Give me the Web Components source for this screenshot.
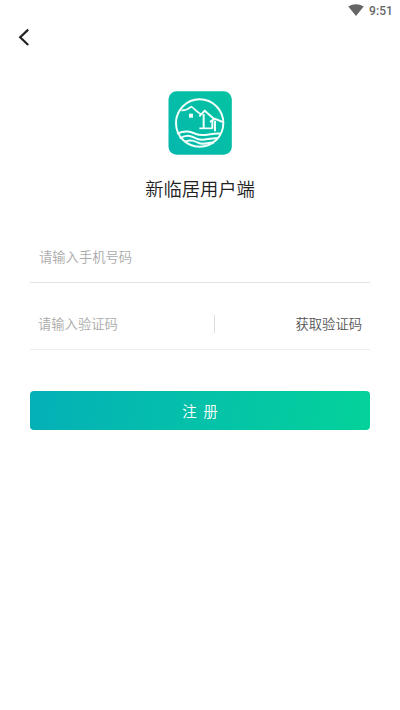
<!DOCTYPE html>
<html lang="zh-CN">
<head>
<meta charset="utf-8">
<title>新临居用户端</title>
<style>
html,body{margin:0;height:100%;background:#fff}
body{font-family:"Noto Sans CJK SC",sans-serif;overflow:hidden}
</style>
</head>
<body>
<register-page></register-page>
<script>
const define=(name,html)=>customElements.define(name,class extends HTMLElement{
  constructor(){
    super();
    const t=document.createElement('template');
    t.innerHTML=html;
    this.attachShadow({mode:'open'}).append(t.content.cloneNode(true));
  }
});

define('status-bar',`
<style>
:host{display:flex;justify-content:flex-end;align-items:center;height:21px;padding:1px 7px 0 0;gap:5px;box-sizing:border-box;color:#666;font:500 12px/20px Roboto,sans-serif}
svg{display:block;margin-top:-2px}
span{letter-spacing:.1px}
</style>
<svg width="16" height="12" viewBox="0 0 16 12"><path d="M8 12 .3 2.6Q3.800 .2 8 .2T15.700 2.600Z" fill="#666"/></svg>
<span><slot></slot></span>`);

define('nav-bar',`
<style>
:host{display:flex;align-items:center;height:33px;padding:0 0 2px 18px;box-sizing:border-box}
svg{display:block}
</style>
<svg width="12" height="18" viewBox="0 0 12 18"><path d="M10.200 1.600 2.200 9.300 10.200 17" fill="none" stroke="#222" stroke-width="2.200"/></svg>`);

define('app-logo',`
<style>:host{display:block;width:64px;height:64px}svg{display:block}</style>
<svg width="64" height="64" viewBox="24 21 192 192" fill="none" stroke="#f2fffb" stroke-linejoin="round">
<defs><linearGradient id="g" x1="0" y1="1" x2="1" y2="0"><stop offset="0" stop-color="#05b7ad"/><stop offset="1" stop-color="#05c3a2"/></linearGradient></defs>
<rect x="25.500" y="22" width="190" height="190" rx="24" fill="url(#g)" stroke="none"/>
<circle cx="119" cy="117" r="71" stroke-width="6"/>
<path d="M64 79C77 80 83 77 94 68C103 74 111 85 123 91" stroke-width="5"/>
<rect x="87" y="89" width="12" height="12" fill="#f2fffb" stroke="none"/>
<path d="M118 97 134 80 165 107M150 114 164 104 188 114" stroke-width="6"/>
<path d="M131 90V132M157 110V134M165 110V142" stroke-width="6"/>
<path d="M118 133H157" stroke-width="5"/>
<path d="M51 149C78 137 92 143 108 150C130 159 149 147 183 149M59 163C83 150 96 156 112 165C132 173 150 160 174 163M73 174C91 164 106 172 118 178C133 182 146 174 162 176" stroke-width="6"/>
</svg>`);

define('form-row',`
<style>
:host{display:flex;align-items:center;height:67px;box-sizing:border-box;border-bottom:1px solid #e3e3e3;padding:15px 8px 0 9px;color:#aaa;font-size:13.300px;font-weight:350;line-height:20px}
.label{flex:1}
::slotted(.code){display:flex;align-items:center;justify-content:flex-end;width:147px;height:18px;border-left:1px solid #ddd;color:#555}
</style>
<span class="label"><slot></slot></span><slot name="action"></slot>`);

define('submit-button',`
<style>
:host{display:flex;align-items:center;justify-content:center;height:39px;border-radius:4px;background:linear-gradient(100deg,#04b0b8,#04d29a);color:#fff;font-size:14.500px;font-weight:350;line-height:20px;word-spacing:3.500px;box-sizing:border-box}
</style>
<slot></slot>`);

define('register-page',`
<style>
:host{display:flex;flex-direction:column;height:710px}
main{display:flex;flex-direction:column;padding:37px 30px 0}
app-logo{align-self:center}
h1{margin:20px 0 0;text-align:center;font-size:18.300px;line-height:27px;font-weight:350;color:#222}
form-row:first-of-type{margin-top:14px}
.second{border-color:#eee;padding-left:8px}
submit-button{margin-top:41px}
</style>
<status-bar>9:51</status-bar>
<nav-bar></nav-bar>
<main>
<app-logo></app-logo>
<h1>新临居用户端</h1>
<form-row>请输入手机号码</form-row>
<form-row class="second">请输入验证码<span class="code" slot="action">获取验证码</span></form-row>
<submit-button>注 册</submit-button>
</main>`);
</script>
</body>
</html>
